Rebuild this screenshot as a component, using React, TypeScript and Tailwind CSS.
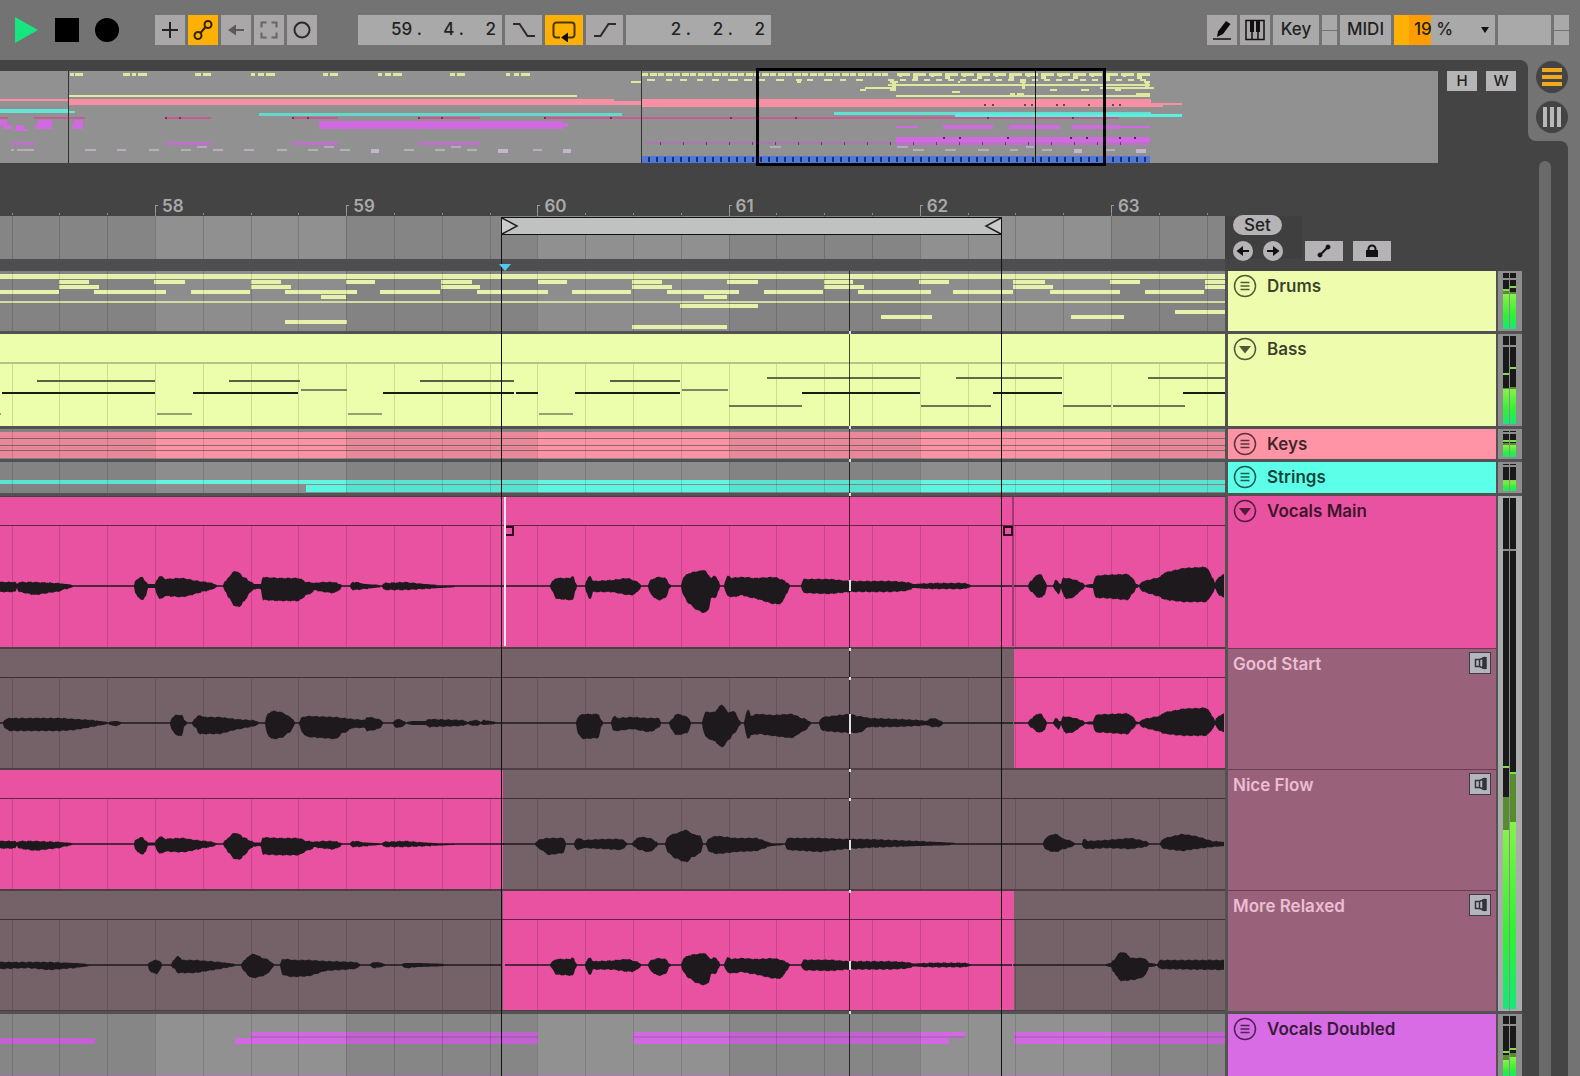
import { type ReactNode } from 'react';
import cn from 'clsx';

type Span = [number, number];
type Sample = [number, number, number];
type Channel = { peak: number; hold: number; level: number };

const WIDTH = 1225;
const FIRST_BAR = 155;
const BAR = 191;
const BEATS = Array.from({ length: 26 }, (_, i) => Math.round(11.6 + i * 47.8));
const BARS = [58, 59, 60, 61, 62, 63];
const LOOP_START = 501;
const LOOP_END = 1001;
const PLAYHEAD = 849;

const toPercent = (x: number) => `${(x / WIDTH) * 100}%`;

/* ---------- clip contents ---------- */

const DRUM_NOTES: { y: number; spans: Span[] }[] = [
  { y: 9, spans: [[59, 89], [154, 185], [251, 281], [346, 375], [441, 472], [538, 567], [632, 662], [727, 758], [824, 853], [919, 949], [1013, 1045], [1110, 1140], [1205, 1225]] },
  { y: 14, spans: [[59, 99], [251, 291], [441, 480], [632, 672], [824, 864], [1013, 1053], [1205, 1225]] },
  { y: 19, spans: [[0, 59], [94, 166], [191, 250], [285, 357], [380, 440], [477, 548], [572, 631], [667, 739], [764, 823], [858, 931], [953, 1013], [1050, 1120], [1145, 1204]] },
  { y: 24, spans: [[321, 346], [704, 727]] },
  { y: 33, spans: [[680, 758]] },
  { y: 39, spans: [[1175, 1225]] },
  { y: 44, spans: [[881, 932], [1071, 1124]] },
  { y: 49, spans: [[285, 347]] },
  { y: 54, spans: [[632, 727]] },
];

const BASS_NOTES: { y: number; color: string; spans: Span[] }[] = [
  { y: 43, color: '#646b48', spans: [[767, 920], [956, 1062], [1148, 1225]] },
  { y: 46, color: '#5a6142', spans: [[37, 155], [229, 300], [420, 514], [610, 680]] },
  { y: 55, color: '#7d8561', spans: [[301, 347], [682, 728]] },
  { y: 58, color: '#1b1d12', spans: [[2, 155], [193, 298], [383, 514], [516, 538], [575, 680], [802, 920], [993, 1062], [1183, 1225]] },
  { y: 71, color: '#6f7752', spans: [[729, 802], [921, 991], [1063, 1111], [1113, 1185]] },
  { y: 79, color: '#98a174', spans: [[0, 1], [157, 192], [348, 382], [539, 573]] },
];

// [x, height above the centre line, height below it]
const TAKE_LEFT: Sample[] = [
  [0, 4, 6], [15, 4, 6], [17, 2, 2], [19, 4, 6], [35, 4, 9], [55, 3, 6], [65, 2, 3], [73, 1, 1], [134, 1, 1],
  [136, 6, 8], [142, 9, 14], [145, 5, 11], [148, 2, 2], [155, 2, 2], [157, 6, 8], [160, 10, 13], [165, 7, 10], [180, 8, 11],
  [192, 6, 9], [205, 4, 5], [217, 1, 1], [223, 1, 1], [226, 5, 6], [230, 10, 13], [235, 15, 20], [239, 13, 21],
  [243, 9, 16], [249, 5, 7], [254, 2, 3], [261, 2, 3], [263, 9, 14], [280, 8, 15], [297, 8, 15], [306, 4, 9],
  [315, 3, 4], [325, 4, 6], [333, 4, 7], [339, 2, 4], [342, 1, 1], [350, 1, 1], [353, 4, 4], [365, 2, 3], [382, 1, 1],
  [385, 3, 4], [405, 4, 4], [425, 2, 3], [440, 1, 2], [458, 1, 1],
];

const TAKE_MIDDLE: Sample[] = [
  [505, 1, 1], [550, 1, 1], [553, 5, 6], [557, 8, 13], [570, 8, 14], [573, 10, 14], [575, 4, 5], [577, 1, 1], [585, 1, 1],
  [587, 6, 8], [590, 10, 13], [593, 5, 6], [612, 6, 6], [627, 8, 9], [632, 6, 9], [639, 3, 4], [641, 1, 1],
  [648, 1, 1], [651, 6, 8], [659, 9, 14], [665, 8, 12], [669, 2, 3], [671, 1, 1], [681, 1, 1], [684, 9, 10], [690, 13, 18],
  [700, 15, 25], [704, 16, 27], [708, 11, 24], [711, 8, 12], [715, 10, 12], [718, 6, 6], [720, 1, 1], [724, 1, 1],
  [728, 10, 10], [732, 8, 11], [742, 9, 9], [754, 8, 12], [773, 9, 18], [780, 7, 18], [786, 4, 8], [790, 1, 1], [801, 1, 1],
  [804, 7, 7], [830, 7, 8], [849, 5, 6], [891, 5, 6], [905, 4, 5], [913, 2, 2], [934, 3, 3], [962, 3, 3],
  [971, 1, 1], [1013, 1, 1],
];

const TAKE_RIGHT: Sample[] = [
  [1014, 1, 1], [1028, 1, 1], [1032, 6, 6], [1040, 12, 12], [1044, 6, 9], [1047, 1, 1], [1053, 1, 1], [1056, 6, 5], [1059, 3, 8],
  [1061, 2, 2], [1063, 8, 8], [1067, 8, 13], [1071, 7, 12], [1080, 4, 5], [1085, 1, 1], [1093, 2, 2], [1096, 10, 12],
  [1103, 11, 12], [1127, 12, 14], [1132, 8, 8], [1136, 2, 2], [1139, 1, 1], [1144, 5, 6], [1160, 9, 11],
  [1167, 14, 14], [1184, 18, 16], [1205, 19, 16], [1212, 9, 8], [1215, 3, 2], [1221, 10, 10], [1225, 12, 12],
];

const GOOD_START: Sample[] = [
  [0, 1, 1], [3, 1, 1], [6, 4, 6], [10, 5, 8], [60, 5, 8], [75, 4, 7], [92, 3, 4], [108, 1, 1], [116, 2, 3], [121, 1, 1],
  [170, 1, 1], [173, 6, 8], [176, 8, 12], [182, 8, 13], [184, 3, 3], [187, 1, 1], [192, 1, 1], [196, 5, 5], [200, 8, 11],
  [203, 6, 11], [220, 6, 11], [235, 4, 7], [250, 3, 4], [259, 1, 1], [265, 1, 1], [268, 9, 12], [273, 12, 16],
  [280, 11, 15], [288, 7, 10], [295, 1, 1], [299, 1, 1], [303, 6, 10], [308, 7, 14], [335, 6, 16], [342, 5, 10],
  [352, 4, 5], [365, 3, 5], [367, 6, 8], [378, 4, 6], [383, 1, 1], [393, 1, 1], [397, 4, 5], [406, 1, 1], [415, 2, 2],
  [426, 2, 2], [430, 4, 4], [460, 3, 3], [468, 1, 1], [475, 3, 3], [481, 1, 1], [484, 3, 2], [497, 1, 1], [576, 1, 1],
  [579, 7, 12], [584, 9, 16], [598, 9, 15], [601, 3, 4], [603, 1, 1], [611, 1, 1], [614, 7, 8], [617, 5, 8],
  [632, 6, 6], [648, 5, 9], [658, 5, 5], [661, 1, 1], [669, 1, 1], [673, 4, 8], [676, 9, 12], [687, 6, 10], [691, 1, 1],
  [702, 1, 1], [706, 11, 14], [715, 11, 18], [722, 18, 24], [728, 10, 17], [733, 12, 11], [739, 3, 3], [741, 1, 1],
  [744, 1, 1], [748, 13, 16], [751, 7, 12], [759, 9, 11], [773, 8, 13], [790, 9, 15], [801, 5, 9], [811, 1, 1],
  [819, 1, 1], [823, 6, 8], [849, 9, 10], [857, 7, 10], [868, 5, 4], [896, 4, 4], [917, 3, 3], [926, 2, 2],
  [934, 5, 4], [938, 3, 4], [943, 1, 1], [1014, 1, 1],
];

const NICE_FLOW: Sample[] = [
  [503, 1, 1], [535, 1, 1], [542, 5, 6], [550, 6, 11], [563, 6, 9], [566, 1, 1], [574, 1, 1], [578, 6, 6], [583, 4, 4], [605, 5, 5],
  [620, 5, 6], [627, 1, 1], [632, 1, 1], [641, 7, 6], [649, 6, 8], [655, 3, 4], [658, 1, 1], [665, 1, 1], [669, 8, 9],
  [678, 11, 15], [686, 14, 18], [692, 10, 13], [700, 8, 9], [703, 1, 1], [706, 1, 1], [710, 6, 8], [718, 8, 10], [735, 6, 8],
  [757, 6, 7], [771, 1, 2], [785, 1, 1], [788, 6, 6], [820, 6, 8], [845, 5, 5], [865, 5, 4], [918, 3, 2], [959, 1, 1],
  [1043, 1, 1], [1047, 7, 6], [1055, 10, 8], [1063, 5, 5], [1075, 1, 1], [1082, 1, 1], [1084, 5, 4], [1088, 3, 5],
  [1106, 4, 4], [1131, 6, 5], [1145, 3, 3], [1149, 1, 1], [1160, 1, 1], [1165, 6, 5], [1182, 10, 7], [1196, 8, 5],
  [1212, 3, 3], [1225, 2, 2],
];

const RELAXED_LEFT: Sample[] = [
  [0, 3, 4], [28, 3, 3], [50, 3, 5], [75, 2, 3], [90, 1, 1], [148, 1, 1], [150, 3, 6], [156, 5, 9], [160, 4, 5], [162, 1, 1],
  [171, 1, 1], [175, 6, 4], [178, 9, 8], [182, 5, 8], [195, 5, 8], [220, 3, 4], [236, 1, 1], [241, 1, 1], [245, 5, 7], [253, 11, 13],
  [262, 7, 11], [274, 1, 1], [280, 1, 1], [283, 6, 10], [295, 5, 12], [310, 5, 11], [325, 4, 6], [355, 3, 4], [360, 1, 1],
  [370, 1, 1], [375, 3, 3], [385, 1, 1], [402, 1, 1], [406, 2, 3], [418, 2, 2], [450, 1, 1], [503, 1, 1],
];

const RELAXED_RIGHT: Sample[] = [
  [1013, 1, 1], [1106, 1, 1], [1111, 2, 2], [1114, 5, 7], [1122, 13, 16], [1131, 7, 15], [1143, 7, 12], [1149, 2, 2],
  [1157, 1, 1], [1161, 5, 4], [1225, 5, 5],
];

// short segments bulge outwards, long ones stay straight; loud parts get a slight ripple
const interpolate = (a: number, b: number, t: number, length: number) => {
  if (length > 12) return a + (b - a) * t;
  return b > a ? a + (b - a) * Math.sin((t * Math.PI) / 2) : b + (a - b) * Math.cos((t * Math.PI) / 2);
};

const wavePath = (samples: Sample[], center: number, gain = 1) => {
  const top: string[] = [];
  const bottom: string[] = [];
  const size = (v: number, x: number) => {
    if (v <= 1.2) return 0.8;
    const ripple = v > 2.5 ? Math.sin(x * 2.3) * 0.35 + Math.sin(x * 0.9) * 0.35 : 0;
    return Math.max(0.8, v * gain + ripple);
  };
  samples.slice(0, -1).forEach(([x, up, down], i) => {
    const [nextX, nextUp, nextDown] = samples[i + 1];
    const length = nextX - x;
    for (let px = x; px < nextX; px += 1) {
      const t = (px - x) / length;
      top.push(`${px},${(center - size(interpolate(up, nextUp, t, length), px)).toFixed(1)}`);
      bottom.unshift(`${px},${(center + size(interpolate(down, nextDown, t, length), px + 5)).toFixed(1)}`);
    }
  });
  return `M${[...top, ...bottom].join('L')}Z`;
};

const Notes = ({ spans, y, height, fill }: { spans: Span[]; y: number; height: number; fill: string }) => (
  <g fill={fill}>
    {spans.map(([from, to]) => (
      <rect key={from} x={from} y={y} width={to - from} height={height} />
    ))}
  </g>
);

const Canvas = ({ height, children, className }: { height: number; children: ReactNode; className?: string }) => (
  <svg
    className={cn('block w-full', className)}
    height={height}
    viewBox={`0 0 ${WIDTH} ${height}`}
    preserveAspectRatio="none"
    shapeRendering="crispEdges"
    aria-hidden="true"
  >
    {children}
  </svg>
);

const Grid = ({ top = 0, height, opacity = 0.13 }: { top?: number; height: number; opacity?: number }) => (
  <g fill="#000" fillOpacity={opacity}>
    {BEATS.map((x) => (
      <rect key={x} x={x} y={top} width={1} height={height - top} />
    ))}
  </g>
);

// every other bar is drawn a shade darker
const BarShade = ({ height }: { height: number }) => (
  <g fill="#000" fillOpacity={0.07}>
    <rect x={0} width={FIRST_BAR} height={height} />
    {[1, 3, 5].map((n) => (
      <rect key={n} x={FIRST_BAR + Math.round(n * 191.2)} width={BAR} height={height} />
    ))}
  </g>
);

const PINK = '#e852a0';
const MUTED = '#756269';

const AudioLane = ({
  height,
  center,
  clips,
  waves,
  children,
}: {
  height: number;
  center: number;
  clips: [number, number, string][];
  waves: string[];
  children?: ReactNode;
}) => (
  <Canvas height={height}>
    <rect width={WIDTH} height={height} fill="#4d3f45" />
    {clips.map(([from, to, color]) => (
      <rect key={from} x={from} y={1} width={to - from} height={height - 2} fill={color} />
    ))}
    <rect y={29} width={WIDTH} height={1} fill="#3b1529" fillOpacity={0.75} />
    <Grid top={30} height={height - 1} opacity={0.14} />
    <g fill="#1d191c" shapeRendering="auto">
      {waves.map((d) => (
        <path key={d} d={d} />
      ))}
    </g>
    {children}
  </Canvas>
);

/* ---------- icons ---------- */

const Icon = ({ size = 24, width = size, children }: { size?: number; width?: number; children: ReactNode }) => (
  <svg width={width} height={size} viewBox={`0 0 ${width} ${size}`} fill="none" stroke="#111" strokeWidth={2} aria-hidden="true">
    {children}
  </svg>
);

const ListIcon = () => (
  <Icon>
    <g stroke="#000" strokeOpacity={0.65} strokeWidth="1.5">
      <circle cx="12" cy="12" r="10.5" />
      <path d="M7.5 8.5h9M7.5 12h9M7.5 15.5h9" />
    </g>
  </Icon>
);

const FoldIcon = () => (
  <Icon>
    <circle cx="12" cy="12" r="10.5" stroke="#000" strokeOpacity={0.65} strokeWidth="1.5" />
    <path d="M6 9h12L12 16.5z" fill="#000" fillOpacity={0.65} stroke="none" />
  </Icon>
);

const SpeakerIcon = () => (
  <Icon size={18}>
    <path d="M4.5 5.5h4v7h-4zM8.500 5.5L13.500 3.5v11L8.5 12.5M12 3v12M15 3v12" stroke="#33333b" strokeWidth="1.5" />
  </Icon>
);

/* ---------- toolbar ---------- */

const ToolButton = ({ label, className, children }: { label: string; className?: string; children?: ReactNode }) => (
  <button
    type="button"
    aria-label={label}
    className={cn('flex h-[30px] shrink-0 items-center justify-center', className ?? 'w-[30px] bg-[#a9a7a8]')}
  >
    {children}
  </button>
);

const PositionField = ({ label, values, className }: { label: string; values: string[]; className: string }) => (
  <div role="group" aria-label={label} className={cn('flex h-[30px] shrink-0 items-center justify-end bg-[#a9a9a9] pr-[6px]', className)}>
    {values.map((value, i) => (
      <input
        key={i}
        aria-label={`${label} ${['bars', 'beats', 'sixteenths'][i]}`}
        defaultValue={value}
        className={cn('bg-transparent text-right outline-none', i === 2 ? 'w-[32px]' : 'w-[42px]')}
      />
    ))}
  </div>
);

const SplitIndicator = () => (
  <div className="flex h-[30px] w-[15px] shrink-0 flex-col gap-px">
    <span className="flex-1 bg-[#a9a9a9]" />
    <span className="flex-1 bg-[#a9a9a9]" />
  </div>
);

const Toolbar = () => (
  <header className="flex h-[60px] items-center pr-[11px] pl-[14px] text-[17px] font-medium text-[#222]">
    <div className="flex shrink-0 items-center gap-4">
      <button type="button" aria-label="Play">
        <Icon size={26} width={25}>
          <path d="M1 0L24 13L1 26z" fill="#17e67f" stroke="none" />
        </Icon>
      </button>
      <button type="button" aria-label="Stop" className="size-6 bg-black" />
      <button type="button" aria-label="Record" className="size-6 rounded-full bg-black" />
    </div>

    <div className="ml-9 flex gap-[3px]">
      <ToolButton label="Overdub">
        <Icon>
          <path d="M12 4v16M4 12h16" stroke="#222" />
        </Icon>
      </ToolButton>
      <ToolButton label="Automation arm" className="w-[30px] bg-[#ffb005]">
        <Icon>
          <circle cx="7" cy="17.5" r="3.5" stroke="#2f2408" />
          <circle cx="17" cy="6.5" r="3.5" stroke="#2f2408" />
          <path d="M9.5 15L14.5 9" stroke="#2f2408" />
        </Icon>
      </ToolButton>
      <ToolButton label="Re-enable automation">
        <Icon>
          <path d="M8 12h12" stroke="#5c585b" />
          <path d="M4 12l8-5.5v11z" fill="#5c585b" stroke="none" />
        </Icon>
      </ToolButton>
      <ToolButton label="Capture">
        <Icon>
          <path d="M4.5 9.5v-5h5M14.5 4.5h5v5M19.5 14.5v5h-5M9.5 19.5h-5v-5" stroke="#666" />
        </Icon>
      </ToolButton>
      <ToolButton label="Session record">
        <Icon>
          <circle cx="12" cy="12" r="7.5" stroke="#2c2a2b" />
        </Icon>
      </ToolButton>
    </div>

    <div className="ml-[41px] flex gap-[3px]">
      <PositionField label="Arrangement position" values={['59 .', '4 .', '2']} className="w-[144px]" />
      <ToolButton label="Punch in" className="w-[37px] bg-[#a9a7a8]">
        <Icon>
          <path d="M1 6h6.5l8 12H23" stroke="#2b2b2b" />
        </Icon>
      </ToolButton>
      <ToolButton label="Loop" className="w-[38px] bg-[#ffb005]">
        <Icon>
          <path d="M8 19.5H4.500a3 3 0 0 1-3-3v-9a3 3 0 0 1 3-3h15a3 3 0 0 1 3 3v9a3 3 0 0 1-3 3H16" stroke="#4a3608" />
          <path d="M9 19.5l7-5v10z" fill="#111" stroke="none" />
        </Icon>
      </ToolButton>
      <ToolButton label="Punch out" className="w-[37px] bg-[#a9a7a8]">
        <Icon>
          <path d="M1 18h6.5l8-12H23" stroke="#2b2b2b" />
        </Icon>
      </ToolButton>
      <PositionField label="Loop length" values={['2 .', '2 .', '2']} className="w-[145px]" />
    </div>

    <div className="ml-auto flex gap-[3px]">
      <ToolButton label="Draw mode">
        <Icon>
          <path d="M8 13.5L16 3l4.500 3L13 16l-6 3z" fill="#0a0a0a" stroke="none" />
          <path d="M3 21h18" strokeWidth="1.5" />
        </Icon>
      </ToolButton>
      <ToolButton label="Computer MIDI keyboard">
        <Icon>
          <rect x="3" y="2.5" width="18" height="19" strokeWidth="1.5" />
          <path d="M9 12v9M15 12v9" strokeWidth="1.5" />
          <path d="M7 3h4v11H7zM13 3h4v11h-4z" fill="#111" stroke="none" />
        </Icon>
      </ToolButton>
      <ToolButton label="Key map" className="w-[46px] bg-[#a9a9a9]">
        Key
      </ToolButton>
      <SplitIndicator />
      <ToolButton label="MIDI map" className="w-[51px] bg-[#a9a9a9]">
        MIDI
      </ToolButton>
      <button
        type="button"
        aria-label="CPU load"
        className="flex h-[30px] w-[101px] items-center justify-between bg-[linear-gradient(90deg,#ffb005_15px,#ff9d00_15px,#ff9d00_37px,#a9a9a9_37px)] pr-[5px] pl-[20px]"
      >
        <span>19 %</span>
        <Icon size={10} width={10}>
          <path d="M1 2h8L5 8z" fill="#111" stroke="none" />
        </Icon>
      </button>
      <span className="h-[30px] w-[53px] bg-[#a9a9a9]" />
      <SplitIndicator />
    </div>
  </header>
);

/* ---------- overview ---------- */

const YELLOW = '#dfe8a0';
const PURPLE = '#d169e0';

const block = (fill: string, y: number, height: number, spans: Span[]) => ({ fill, y, height, spans });
const repeat = (from: number, to: number, step: number, size: number): Span[] =>
  Array.from({ length: Math.ceil((to - from) / step) }, (_, i) => [
    from + i * step,
    Math.min(to, from + i * step + size),
  ]);

const OVERVIEW = [
  block(YELLOW, 2, 3, [[70, 74], [75, 83], [123, 130], [132, 136], [138, 147], [195, 201], [203, 211], [251, 255], [258, 264], [266, 275], [323, 328], [330, 338], [378, 382], [385, 391], [393, 402], [450, 455], [457, 465], [506, 510], [514, 519], [521, 530]]),
  block(YELLOW, 2, 3, repeat(642, 890, 16, 6)),
  block(YELLOW, 2, 3, repeat(650, 890, 16, 7)),
  block(YELLOW, 2, 3, repeat(897, 1150, 16, 13)),
  block(YELLOW, 4, 4, repeat(913, 1150, 32, 5)),
  block(YELLOW, 3, 3, repeat(899, 1150, 32, 3)),
  block(YELLOW, 8, 2, [[647, 655], [666, 672], [680, 687], [697, 703], [712, 719], [728, 738], [744, 752], [759, 765], [776, 784], [796, 802], [807, 813], [824, 832], [840, 846], [856, 863], [888, 894]]),
  block(YELLOW, 8, 2, repeat(900, 1150, 12, 6)),
  block(YELLOW, 10, 2, [[631, 641], [797, 801], [890, 898], [958, 960], [1020, 1026], [1144, 1150]]),
  block(YELLOW, 13, 2, [[888, 1150]]),
  block(YELLOW, 12, 6, [[892, 896], [1022, 1025], [1145, 1149]]),
  block(YELLOW, 16, 2, [[865, 896], [1100, 1154]]),
  block(YELLOW, 18, 2, [[860, 866], [890, 896], [1050, 1057], [1081, 1089], [1115, 1121]]),
  block(YELLOW, 20, 2, [[952, 960]]),
  block(YELLOW, 22, 3, [[1010, 1015], [1017, 1024], [1136, 1150]]),
  block(YELLOW, 24, 2, [[68, 577], [896, 1150]]),
  block('#f98fa3', 28, 2, [[0, 68]]),
  block('#f98fa3', 28, 6, [[68, 614]]),
  block('#f98fa3', 30, 4, [[614, 641]]),
  block('#f98fa3', 28, 8, [[641, 1151]]),
  block('#f98fa3', 32, 2, [[1151, 1182]]),
  block('#f98fa3', 34, 2, [[1151, 1163]]),
  block('#64e6d6', 38, 4, [[0, 68]]),
  block('#64e6d6', 40, 2, [[68, 75]]),
  block('#64d8cb', 42, 3, [[259, 622]]),
  block('#64e0d2', 41, 3, [[834, 1151]]),
  block('#5cf0e0', 43, 3, [[955, 1182]]),
  block('#c65a92', 46, 2, [[0, 8], [34, 85], [165, 211], [292, 338], [418, 480], [544, 1119]]),
  block(PURPLE, 49, 6, [[0, 7], [38, 52], [74, 83]]),
  block(PURPLE, 54, 4, [[3, 12], [35, 52], [72, 83], [16, 24]]),
  block(PURPLE, 58, 2, [[15, 28]]),
  block(PURPLE, 50, 8, [[319, 563]]),
  block(PURPLE, 52, 4, [[563, 568]]),
  block(PURPLE, 55, 2, [[896, 918], [1120, 1150]]),
  block(PURPLE, 54, 4, [[943, 993], [1009, 1060], [1072, 1120]]),
  block(PURPLE, 66, 5, [[896, 1150]]),
  block('#be70ca', 71, 3, [[10, 34], [165, 211], [292, 338], [418, 480], [896, 1150]]),
  block('#b56fbf', 71, 2, repeat(646, 896, 8, 6)),
  block('#b9a7c6', 75, 2, [[197, 207], [324, 334], [451, 461], [770, 781], [897, 908], [1026, 1034]]),
  block('#b9aeb9', 78, 2, [[11, 14], [17, 34], [85, 96], [117, 126], [149, 159], [181, 191], [213, 223], [244, 254], [277, 287], [308, 318], [340, 350], [404, 414], [435, 445], [467, 477], [533, 542], [913, 924], [945, 956], [978, 989], [1010, 1018], [1042, 1052], [1106, 1115]]),
  block('#c5b4d2', 78, 4, [[371, 379], [498, 508], [563, 571], [1074, 1082], [1136, 1146]]),
  block('#4f78d8', 85, 7, [[642, 1150]]),
  block('#1c2f70', 86, 5, repeat(648, 1148, 8, 2)),
  block('#7a3a52', 33, 2, [[984, 986], [992, 994], [1024, 1026], [1031, 1033], [1056, 1058], [1063, 1065], [1088, 1090], [1112, 1114], [1119, 1121]]),
  block('#5a2060', 66, 2, [[943, 945], [959, 961], [1007, 1009], [1070, 1072], [1086, 1088], [1119, 1121], [1134, 1136]]),
  block('#5f4060', 71, 3, repeat(660, 1140, 23, 1)),
  block('#7d2f4c', 46, 2, [[165, 167], [179, 181], [292, 294], [307, 309], [418, 420], [441, 443], [544, 546], [610, 612], [730, 732], [795, 797], [987, 989], [1072, 1074]]),
  block('#333', 0, 92, [[68, 69], [641, 642]]),
];

const Overview = () => (
  <div className="flex gap-[9px] pt-[11px] pr-[12px]">
    <div className="relative min-w-0 flex-1 bg-[#919191]">
      <svg className="block w-full" height={92} viewBox="0 0 1438 92" preserveAspectRatio="none" shapeRendering="crispEdges" aria-hidden="true">
        {OVERVIEW.map((props, i) => (
          <Notes key={i} {...props} />
        ))}
        <rect x={1035} width={1} height={92} fill="#111" />
      </svg>
      <div
        className="absolute -top-[3px] -bottom-[3px] border-[3px] border-black"
        style={{ left: `${(756 / 1438) * 100}%`, width: `${(350 / 1438) * 100}%` }}
      />
    </div>
    <button type="button" className="h-[20px] w-[30px] bg-[#b5b5b5] text-[15px] leading-5 font-medium text-[#222]">
      H
    </button>
    <button type="button" className="h-[20px] w-[30px] bg-[#b5b5b5] text-[15px] leading-5 font-medium text-[#222]">
      W
    </button>
  </div>
);

/* ---------- ruler ---------- */

const Ruler = () => (
  <div className="flex gap-[3px]">
    <div className="min-w-0 flex-1">
      <div className="flex h-[53px] items-end overflow-hidden">
        <span style={{ width: toPercent(FIRST_BAR) }} className="shrink-0" />
        {BARS.map((bar) => (
          <span key={bar} style={{ width: toPercent(191.2) }} className="flex shrink-0 items-end gap-1">
            <i className="h-[11px] w-[3px] border-t border-l border-[#999]" />
            <span className="text-[17px] leading-5 font-semibold text-[#aaa]">{bar}</span>
          </span>
        ))}
      </div>
      <Canvas height={55} className="overflow-visible">
        <rect width={WIDTH} height={43} fill="#909090" />
        <BarShade height={43} />
        <Grid height={43} opacity={0.16} />
        <g fill="#888">
          {BEATS.map((x) => (
            <rect key={x} x={x} y={-3} width={1} height={2} />
          ))}
        </g>
        <rect y={43} width={WIDTH} height={12} fill="#4e4e50" />
        <rect x={LOOP_START} y={1} width={LOOP_END - LOOP_START + 1} height={18} fill="#111" />
        <rect x={LOOP_START + 1} y={2} width={LOOP_END - LOOP_START - 1} height={16} fill="#c0c1c1" />
        <g shapeRendering="auto" stroke="#222" strokeWidth={1.5} fill="#cbcbcb">
          <path d="M502 2L517 10L502 18" />
          <path d="M1001 2L986 10L1001 18" />
        </g>
        <rect x={LOOP_START} y={1} width={1} height={54} fill="#111" />
        <rect x={LOOP_END} y={1} width={1} height={54} fill="#111" />
        <path d="M499 48h12l-6 7z" fill="#55c8e8" shapeRendering="auto" />
      </Canvas>
    </div>
    <div className="flex w-[300px] shrink-0 flex-col gap-[6px] pt-[52px] pl-[5px] text-[#222]">
      <button type="button" className="h-[20px] w-[49px] rounded-full bg-[#b5b3b5] text-[17px] leading-5 font-medium">
        Set
      </button>
      <div className="flex">
        <button type="button" aria-label="Previous locator" className="size-5 rounded-full bg-[#b5b3b5]">
          <Icon size={20}>
            <path d="M8 10h8" />
            <path d="M3.5 10L10 5v10z" fill="#111" stroke="none" />
          </Icon>
        </button>
        <button type="button" aria-label="Next locator" className="ml-[10px] size-5 rounded-full bg-[#b5b3b5]">
          <Icon size={20}>
            <path d="M4 10h8" />
            <path d="M16.5 10L10 5v10z" fill="#111" stroke="none" />
          </Icon>
        </button>
        <button type="button" aria-label="Automation mode" className="ml-[22px] flex h-5 w-[38px] justify-center bg-[#b5b3b5]">
          <Icon size={20}>
            <path d="M6 14L14 6" />
            <circle cx="6" cy="14" r="2" fill="#111" strokeWidth="1" />
            <circle cx="14" cy="6" r="2" fill="#111" strokeWidth="1" />
          </Icon>
        </button>
        <button type="button" aria-label="Lock envelopes" className="ml-[10px] flex h-5 w-[38px] justify-center bg-[#b5b3b5]">
          <Icon size={20}>
            <rect x="4" y="9" width="12" height="7" fill="#111" stroke="none" />
            <path d="M6.5 10V8a3.5 3.5 0 0 1 7 0v2" />
          </Icon>
        </button>
      </div>
    </div>
  </div>
);

/* ---------- tracks ---------- */

const Meter = ({ height, marks, channels, active }: { height: number; marks: number[]; channels: Channel[]; active?: boolean }) => (
  <svg
    width={24}
    height={height}
    className={cn('block h-full shrink-0', active ? 'bg-[#aaacad]' : 'bg-[#8e8e8e]')}
    shapeRendering="crispEdges"
    aria-hidden="true"
  >
    <defs>
      <linearGradient id="level" x1="0" y1="0" x2="0" y2="1">
        <stop offset="0" stopColor="#86f24a" />
        <stop offset="0.6" stopColor="#30f033" />
        <stop offset="1" stopColor="#16e878" />
      </linearGradient>
    </defs>
    {channels.map(({ peak, hold, level }, i) => (
      <g key={i} transform={`translate(${i ? 12 : 5} 0)`}>
        <rect y={2} width={6} height={height - 4} fill="#1a1a1a" />
        {marks.map((y) => (
          <rect key={y} y={y} width={6} height={1} fill="#8e8e8e" />
        ))}
        <rect y={hold} width={6} height={level - hold} fill="#578c30" />
        <rect y={level} width={6} height={height - level - 2} fill="url(#level)" />
        <rect y={peak} width={6} height={2} fill="#84dc48" />
      </g>
    ))}
    <rect x={11} width={1} height={height} fill="#8e8e8e" />
  </svg>
);

const TrackHeader = ({ name, fold, className }: { name: string; fold?: boolean; className: string }) => (
  <div className={cn('flex w-[268px] shrink-0 items-start gap-[10px] pt-[3px] pl-[5px]', className)}>
    <button type="button" aria-label={`${fold ? 'Fold' : 'Unfold'} ${name}`} className="shrink-0">
      {fold ? <FoldIcon /> : <ListIcon />}
    </button>
    <span className="text-[17px] leading-6 font-semibold text-black/75">{name}</span>
  </div>
);

const LaneHeader = ({ name }: { name: string }) => (
  <div className="flex h-[121px] items-start justify-between border-t border-[#6b3c52] bg-[#9a627a] pt-[3px] pr-[5px] pl-[5px]">
    <span className="text-[17px] leading-6 font-semibold text-[#ecbdd3]">{name}</span>
    <button type="button" aria-label={`Audition ${name}`} className="flex size-[22px] items-center justify-center border border-[#3c3c44] bg-[#b4b4bc]">
      <SpeakerIcon />
    </button>
  </div>
);

const Track = ({ clips, header, meter, className }: { clips: ReactNode; header: ReactNode; meter: ReactNode; className?: string }) => (
  <div className={cn('flex shrink-0', className)}>
    <div className="mr-[3px] min-w-0 flex-1">{clips}</div>
    {header}
    <div className="ml-[2px]">{meter}</div>
  </div>
);

// the playhead turns light where it crosses a border or a waveform
const PLAYHEAD_BREAKS = [60, 155, 188, 222, 377, 406, 498, 527, 619, 740].map((top) => ({ top, height: 3 }));
const PLAYHEAD_LEVELS = [
  { top: 309, height: 11 },
  { top: 443, height: 20 },
  { top: 569, height: 10 },
  { top: 690, height: 9 },
];

const Tracks = () => (
  <section aria-label="Tracks" className="relative mr-[6px] flex flex-1 flex-col gap-[3px] bg-[#525252]">
    <Track
      clips={
        <Canvas height={60}>
          <rect width={WIDTH} height={60} fill="#8e8d8e" />
          <BarShade height={60} />
          <rect y={3} width={WIDTH} height={5} fill="#e6f1a9" />
          <rect y={30} width={WIDTH} height={2} fill="#d3dba0" />
          {DRUM_NOTES.map(({ y, spans }) => (
            <Notes key={y} y={y} height={4} spans={spans} fill="#e6f1a9" />
          ))}
          <Grid height={60} />
        </Canvas>
      }
      header={<TrackHeader name="Drums" className="bg-[#edfdad]" />}
      meter={<Meter height={60} marks={[7, 8]} channels={[{ peak: 18, hold: 20, level: 23 }, { peak: 15, hold: 21, level: 23 }]} />}
    />
    <Track
      clips={
        <Canvas height={92}>
          <rect width={WIDTH} height={92} fill="#ecfdab" />
          <rect y={28} width={WIDTH} height={2} fill="#b7c485" />
          <Grid top={30} height={92} />
          {BASS_NOTES.map(({ y, color, spans }) => (
            <Notes key={y} y={y} height={2} spans={spans} fill={color} />
          ))}
        </Canvas>
      }
      header={<TrackHeader name="Bass" fold className="bg-[#edfdad]" />}
      meter={<Meter height={92} marks={[11, 12]} channels={[{ peak: 39, hold: 54, level: 55 }, { peak: 33, hold: 53, level: 55 }]} />}
    />
    <Track
      clips={
        <Canvas height={30}>
          <rect width={WIDTH} height={30} fill="#8e8d8e" />
          <rect y={3} width={WIDTH} height={26} fill="#fb93a5" />
          {[9, 16, 21].map((y) => (
            <rect key={y} y={y} width={WIDTH} height={1} fill="#8d6a70" />
          ))}
          <BarShade height={30} />
          <Grid height={30} />
        </Canvas>
      }
      header={<TrackHeader name="Keys" className="bg-[#ff94a6]" />}
      meter={<Meter height={30} marks={[3, 4]} channels={[{ peak: 11, hold: 14, level: 16 }, { peak: 11, hold: 14, level: 16 }]} />}
    />
    <Track
      clips={
        <Canvas height={31}>
          <rect width={WIDTH} height={31} fill="#8e8d8e" />
          <rect y={18} width={WIDTH} height={4} fill="#62f6e2" />
          <rect x={306} y={23} width={WIDTH} height={7} fill="#5cf5e0" />
          <BarShade height={31} />
          <Grid height={31} />
        </Canvas>
      }
      header={<TrackHeader name="Strings" className="bg-[#5cffe8]" />}
      meter={<Meter height={31} marks={[3, 4]} channels={[{ peak: 18, hold: 18, level: 19 }, { peak: 18, hold: 18, level: 19 }]} />}
    />
    <Track
      clips={
        <>
          <AudioLane
            height={152}
            center={90}
            clips={[[0, WIDTH, PINK]]}
            waves={[wavePath(TAKE_LEFT, 90), 'M457,89.2H506V90.8H457Z', wavePath(TAKE_MIDDLE, 90), wavePath(TAKE_RIGHT, 90)]}
          >
            <rect x={504} y={1} width={2} height={149} fill="#ffe6f3" />
            <rect x={1012} y={1} width={2} height={149} fill="#8f3568" fillOpacity={0.8} />
            <g fill="none" stroke="#2a0c1c" strokeWidth={2}>
              <path d="M506 31H513V39H506" />
              <path d="M1004 31H1012V39H1004Z" />
            </g>
          </AudioLane>
          <AudioLane
            height={121}
            center={75}
            clips={[[0, 1014, MUTED], [1014, WIDTH, PINK]]}
            waves={[wavePath(GOOD_START, 75), wavePath(TAKE_RIGHT, 75, 0.8)]}
          />
          <AudioLane
            height={121}
            center={75}
            clips={[[0, 503, PINK], [503, WIDTH, MUTED]]}
            waves={[wavePath(TAKE_LEFT, 75, 0.75), 'M457,74.2H504V75.8H457Z', wavePath(NICE_FLOW, 75)]}
          />
          <AudioLane
            height={121}
            center={75}
            clips={[[0, 503, MUTED], [503, 1014, PINK], [1014, WIDTH, MUTED]]}
            waves={[wavePath(RELAXED_LEFT, 75), wavePath(TAKE_MIDDLE, 75, 0.75), wavePath(RELAXED_RIGHT, 75)]}
          />
        </>
      }
      header={
        <div className="w-[268px] shrink-0">
          <TrackHeader name="Vocals Main" fold className="h-[152px] bg-[#e852a0]" />
          <LaneHeader name="Good Start" />
          <LaneHeader name="Nice Flow" />
          <LaneHeader name="More Relaxed" />
        </div>
      }
      meter={<Meter active height={515} marks={[53, 54]} channels={[{ peak: 270, hold: 301, level: 334 }, { peak: 276, hold: 278, level: 326 }]} />}
    />
    <Track
      className="min-h-[62px] grow overflow-hidden bg-[#525252]"
      clips={
        <Canvas height={62}>
          <rect width={WIDTH} height={62} fill="#909190" />
          <Notes y={18} height={4} fill={PURPLE} spans={[[251, 538], [633, 965], [1014, 1225]]} />
          <Notes y={24} height={6} fill={PURPLE} spans={[[0, 95], [235, 538], [633, 949], [1014, 1225]]} />
          <Notes y={22} height={2} fill="#b566c3" spans={[[251, 538], [633, 965], [1014, 1225]]} />
          <rect y={61} width={WIDTH} height={1} fill="#b774c0" />
          <BarShade height={62} />
          <Grid height={62} />
        </Canvas>
      }
      header={<TrackHeader name="Vocals Doubled" className="bg-[#d86ce4]" />}
      meter={<Meter height={66} marks={[10, 11]} channels={[{ peak: 37, hold: 41, level: 46 }, { peak: 34, hold: 39, level: 43 }]} />}
    />

    {/* loop edges and playhead run through every track */}
    <i className="absolute inset-y-0 left-0 w-[calc(100%-297px)]">
      <i className="absolute inset-y-0 w-px bg-[#111]" style={{ left: toPercent(LOOP_START) }} />
      <i className="absolute inset-y-0 w-px bg-[#111]" style={{ left: toPercent(LOOP_END) }} />
      <i className="absolute inset-y-0 w-px bg-black/70" style={{ left: toPercent(PLAYHEAD) }} />
      {[...PLAYHEAD_BREAKS, ...PLAYHEAD_LEVELS].map(({ top, height }) => (
        <i key={top} className="absolute w-[2px] bg-[#dedede]" style={{ top, height, left: toPercent(PLAYHEAD) }} />
      ))}
    </i>
  </section>
);

const ViewSelector = () => (
  <aside className="flex w-[52px] shrink-0 flex-col">
    <div className="bg-[linear-gradient(90deg,#444_20px,#737373_20px)]">
      <div className="flex h-[81px] flex-col items-center gap-2 rounded-bl-lg bg-[#737373] pr-[4px] pt-px">
        <button type="button" aria-label="Arrangement view" className="flex size-8 items-center justify-center rounded-full bg-[#444]">
          <Icon size={20}>
            <path d="M0 3h20M0 10h20M0 17h20" stroke="#f0a81e" strokeWidth="4" />
          </Icon>
        </button>
        <button type="button" aria-label="Session view" className="flex size-8 items-center justify-center rounded-full bg-[#444]">
          <Icon size={20}>
            <path d="M3 0v20M10 0v20M17 0v20" stroke="#b8b8b8" strokeWidth="4" />
          </Icon>
        </button>
      </div>
    </div>
    <div className="mr-[12px] flex flex-1 justify-end rounded-tr-lg bg-[#444] pt-[20px] pr-[17px]">
      <div className="w-[12px] rounded-t-full bg-[#6a6a6a]" />
    </div>
  </aside>
);

export default function App() {
  return (
    <div className="flex min-h-screen flex-col bg-[#737373] font-['Inter','Liberation_Sans',sans-serif]">
      <Toolbar />
      <main className="flex flex-1">
        <div className="flex min-w-0 flex-1 flex-col rounded-tr-lg bg-[#444]">
          <Overview />
          <Ruler />
          <Tracks />
        </div>
        <ViewSelector />
      </main>
    </div>
  );
}
